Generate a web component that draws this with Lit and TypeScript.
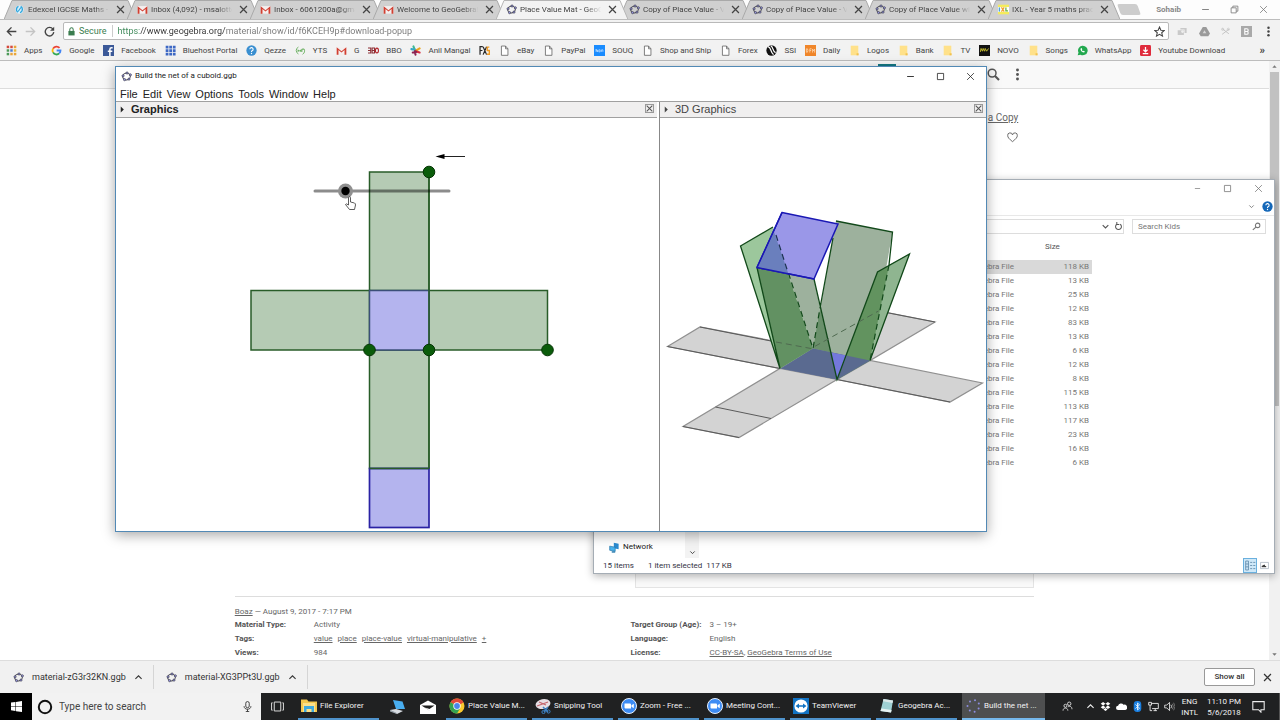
import { LitElement, html, svg, css, nothing, type TemplateResult } from "lit";
import { customElement } from "lit/decorators.js";
import { classMap } from "lit/directives/class-map.js";

const icons: Record<string, TemplateResult> = {
  ggb: svg`<ellipse cx="8" cy="8" rx="5.6" ry="4.8" transform="rotate(-18 8 8)" fill="none" stroke="#50505c" stroke-width="1.5"/>
    <g fill="#9b9be8" stroke="#33333d" stroke-width=".9"><circle cx="3" cy="7" r="1.6"/><circle cx="8.8" cy="2.9" r="1.6"/><circle cx="13.6" cy="5.6" r="1.6"/><circle cx="11.6" cy="11.8" r="1.6"/><circle cx="5.2" cy="12.6" r="1.6"/></g>`,
  dots: svg`<g fill="#8d8de0"><circle cx="2.5" cy="8" r="1"/><circle cx="5" cy="3.4" r="1"/><circle cx="10" cy="2.2" r="1"/><circle cx="13.8" cy="5.4" r="1"/><circle cx="13.6" cy="10.4" r="1"/><circle cx="9.6" cy="13.8" r="1"/><circle cx="4.8" cy="12.6" r="1"/></g>`,
  gmail: svg`<path d="M1 3h14v11H1z" fill="#f4eeee"/><path d="M1 14V3.4L8 9l7-5.6V14h-2.6V7.4L8 11 3.6 7.4V14z" fill="#d23f31"/>`,
  edx: svg`<circle cx="8" cy="8" r="6" fill="#d9f0fb"/><path d="M9.800 3.500a5 5 0 0 1-1 9M5.500 12A5 5 0 0 1 6.500 3.500" fill="none" stroke="#2ba4dc" stroke-width="2"/><path d="M6 11l4-6" stroke="#2ba4dc" stroke-width="1.600"/>`,
  ixl: svg`<path d="M0 1h16v14H0z" fill="#f5ec5a"/><path d="M0 4.500h16v7H0z" fill="#fff"/><path d="M2 5v6" stroke="#4aa3df" stroke-width="2"/><path d="M5 5l4 6M9 5l-4 6" stroke="#f0a030" stroke-width="1.800"/><path d="M11.500 5v5h3" fill="none" stroke="#67b346" stroke-width="1.800"/>`,
  close: svg`<path d="M3 3l10 10M13 3L3 13" stroke="currentColor" stroke-width="1.8" fill="none"/>`,
  thinClose: svg`<path d="M2 2l12 12M14 2L2 14" stroke="currentColor" stroke-width="1.4" fill="none"/>`,
  min: svg`<path d="M2 8h12" stroke="currentColor" stroke-width="1.6"/>`,
  max: svg`<path d="M2.500 2.500h11v11h-11z" stroke="currentColor" stroke-width="1.4" fill="none"/>`,
  restore: svg`<path d="M2 5h9v9H2zM5 5V2h9v9h-3" stroke="currentColor" stroke-width="1.4" fill="none"/>`,
  back: svg`<path d="M15 8H2.500M8 2L2 8l6 6" stroke="currentColor" stroke-width="2" fill="none"/>`,
  forward: svg`<path d="M1 8h12.500M8 2l6 6-6 6" stroke="currentColor" stroke-width="2" fill="none"/>`,
  reload: svg`<path d="M13 4.500A6.200 6.200 0 1 0 14.200 9" stroke="currentColor" stroke-width="2" fill="none"/><path d="M14.800 1v6h-6z" fill="currentColor"/>`,
  lock: svg`<path d="M2.500 7h11v8h-11z" fill="currentColor"/><path d="M5 7V4.500a3 3 0 0 1 6 0V7" fill="none" stroke="currentColor" stroke-width="1.800"/>`,
  star: svg`<path d="M8 1.500l2 4.600 5 .4-3.800 3.300 1.200 4.900L8 12l-4.400 2.700 1.200-4.900L1 6.500l5-.4z" fill="none" stroke="#444" stroke-width="1.500"/>`,
  camera: svg`<path d="M1 6h9v7H1zM5 3h9v7h-3V5H5z" fill="#c9c9c9"/><circle cx="8" cy="8" r="2" fill="#eee"/>`,
  drive: svg`<path d="M5.500 1.500h5L16 11l-2.500 4h-11L0 11z" fill="#9a9a9a"/><path d="M8 6l2.700 4.600H5.300z" fill="#d6d6d6"/>`,
  scissors: svg`<path d="M2 3l12 9M2 13l12-9" stroke="#bdbdbd" stroke-width="1.500"/><circle cx="3" cy="4" r="2" fill="none" stroke="#bdbdbd"/><circle cx="13" cy="4" r="2" fill="none" stroke="#bdbdbd"/>`,
  bbox: svg`<path d="M0 0h16v16H0z" fill="#a9a9a9"/><path d="M5.500 4v8h3a2 2 0 0 0 0-4h-3 3a2 2 0 0 0 0-4z" fill="none" stroke="#fff" stroke-width="1.600"/>`,
  more: svg`<circle cx="8" cy="2.500" r="1.800" fill="currentColor"/><circle cx="8" cy="8" r="1.800" fill="currentColor"/><circle cx="8" cy="13.500" r="1.800" fill="currentColor"/>`,
  apps: svg`<g><path d="M1 1h3.600v3.600H1z" fill="#d5493c"/><path d="M6.200 1h3.600v3.600H6.200z" fill="#d5493c"/><path d="M11.400 1H15v3.600h-3.600z" fill="#e9a53a"/><path d="M1 6.200h3.600v3.600H1z" fill="#4c9a58"/><path d="M6.200 6.200h3.600v3.600H6.200z" fill="#4b7fd0"/><path d="M11.400 6.200H15v3.600h-3.600z" fill="#e9b93a"/><path d="M1 11.400h3.600V15H1z" fill="#4c9a58"/><path d="M6.200 11.400h3.600V15H6.200z" fill="#e9a53a"/><path d="M11.400 11.400H15V15h-3.600z" fill="#e9a53a"/></g>`,
  google: svg`<g fill="none" stroke-width="2.600"><path d="M12.400 4.200A5.800 5.800 0 0 0 3 5.200" stroke="#ea4335"/><path d="M3 5.200a5.800 5.800 0 0 0 0 5.600" stroke="#fbbc05"/><path d="M3 10.800a5.800 5.800 0 0 0 9 1.500" stroke="#34a853"/><path d="M12 12.300A5.800 5.800 0 0 0 13.800 8H8.200" stroke="#4285f4"/></g>`,
  facebook: svg`<path d="M0 0h16v16H0z" fill="#3b5998"/><path d="M10 16V6.500a2.500 2.500 0 0 1 2.500-2.500H14M7 9h6.500" stroke="#fff" stroke-width="2.200" fill="none"/>`,
  bluehost: svg`<path d="M1 1h4v4H1zM6.200 1h4v4h-4zM11.400 1h4v4h-4zM1 6.200h4v4H1zM6.200 6.200h4v4h-4zM11.400 6.200h4v4h-4zM1 11.400h4v4H1zM6.200 11.400h4v4h-4zM11.400 11.400h4v4h-4z" fill="#3d68c4"/>`,
  help: svg`<circle cx="8" cy="8" r="7.500" fill="var(--help, #3a8fd0)"/><path d="M5.600 6.200a2.400 2.400 0 1 1 3.300 2.200c-.7.300-.9.700-.9 1.600" stroke="#fff" stroke-width="1.600" fill="none"/><circle cx="8" cy="12.300" r="1" fill="#fff"/>`,
  yts: svg`<path d="M5 3a5.500 5.500 0 0 0 0 10M11 13.500a5.500 5.500 0 0 0 2-8" fill="none" stroke="#5aa84f" stroke-width="1.200"/><path d="M4.500 10V7l2 2 2-2v3M10 10V6h3" stroke="#5aa84f" stroke-width="1.400" fill="none"/>`,
  bbo: svg`<path d="M0 4.500h4v7H0m0-3.500h3.500M6 4.500h3.500v7H6zm0 3.500h3.500" stroke="#8a2d33" stroke-width="1.500" fill="none"/><ellipse cx="13" cy="8" rx="2.200" ry="3.500" fill="none" stroke="#b3262b" stroke-width="1.600"/>`,
  slack: svg`<g stroke-width="3" stroke-linecap="round"><path d="M5 2l2 5" stroke="#3eb991"/><path d="M2 6l6 1" stroke="#36a6c8"/><path d="M9 8l5-3" stroke="#e9a820"/><path d="M8 9l6 2" stroke="#d72b3f"/><path d="M4 11l5-1M8 14l-1-5" stroke="#8a2250"/></g>`,
  fxs: svg`<path d="M1.500 14V2.500h4M1.500 8h3.500M6 2.500l5 11.500M11 2.500L6 14" stroke="#2a2a2a" stroke-width="1.800" fill="none"/><path d="M15 3h-3v5h3v5.500h-3.500" stroke="#f09a22" stroke-width="2" fill="none"/>`,
  page: svg`<path d="M3.500 1.500h6l3.500 4V15H3.500z" fill="#fff" stroke="#666" stroke-width="1.200"/><path d="M9.500 1.500V5.500H13" fill="none" stroke="#666" stroke-width="1.200"/>`,
  souq: svg`<path d="M0 0h16v16H0z" fill="#1a8cff"/><path d="M3 10V6l2 4V7m2 0v3h2V7H7m4 3V7h2v3" stroke="#cfe6ff" fill="none"/>`,
  ssi: svg`<circle cx="8" cy="8" r="7.500" fill="#111"/><path d="M3 2.500c5 1 3 8 8 11.500M7 1c4 2 2 8 7 10" stroke="#fff" stroke-width="1.800" fill="none"/>`,
  dfm: svg`<path d="M0 0h16v16H0z" fill="#f0862a"/><path d="M2 5.500v5h1.500q1.500-2.500 0-5zM7 11V5.500h2.500M7 8h2M11 11V6l1.500 2.500L14 6v5" stroke="#ffe3c4" fill="none"/>`,
  folder: svg`<path d="M2.500 1h11v14h-11z" fill="#ffe18a"/><path d="M11 12h3v3h-3z" fill="#f2c24f"/>`,
  novo: svg`<path d="M0 0h16v16H0z" fill="#111"/><path d="M2 10l1-5 2 4 1-4 2 4 1-4 2 4 3-4" stroke="#c7bd2e" stroke-width="1.400" fill="none"/>`,
  whatsapp: svg`<path d="M1 15l1.200-4A7 7 0 1 1 5 14z" fill="#22a84e"/><path d="M5 5.500c0 3 2.500 5.500 5.500 5.500l.8-1.800-1.800-1-1 .8-1.600-1.600.8-1-.8-1.900z" fill="#fff"/>`,
  ytd: svg`<rect width="16" height="16" rx="2" fill="#df2b3c"/><path d="M8 3v6M5 7l3 3 3-3M4 12.500h8" stroke="#fff" stroke-width="1.800" fill="none"/>`,
  search: svg`<circle cx="6.300" cy="6.300" r="4.800" fill="none" stroke="currentColor" stroke-width="1.800"/><path d="M9.800 9.800l5 5" stroke="currentColor" stroke-width="2.600"/>`,
  find: svg`<circle cx="10" cy="6" r="4" fill="none" stroke="currentColor" stroke-width="1.800"/><path d="M7 9l-5.500 5" stroke="currentColor" stroke-width="2"/>`,
  heart: svg`<path d="M8 14C3 10 1 7.800 1 5.300a3.500 3.500 0 0 1 7-1 3.500 3.500 0 0 1 7 1C15 7.800 13 10 8 14z" fill="none" stroke="currentColor" stroke-width="1.400"/>`,
  down: svg`<path d="M3 5.500l5 5 5-5" fill="none" stroke="currentColor" stroke-width="2"/>`,
  up: svg`<path d="M2.500 10.500L8 5l5.500 5.500" fill="none" stroke="currentColor" stroke-width="1.900"/>`,
  triUp: svg`<path d="M3 11l5-6 5 6z" fill="currentColor"/>`,
  triDown: svg`<path d="M3 5l5 6 5-6z" fill="currentColor"/>`,
  triRight: svg`<path d="M4 1l7 7-7 7z" fill="currentColor"/>`,
  refresh: svg`<path d="M5 4a5.200 5.200 0 1 0 6 0M5 0v4.500h4.500" fill="none" stroke="currentColor" stroke-width="1.800"/>`,
  network: svg`<path d="M7 1l7 1.500v8L7 9z" fill="#2a8bd0"/><path d="M1 6l8 1.500v6L1 12z" fill="#49b3ee" stroke="#2477ab"/><path d="M4 14.500h5" stroke="#2477ab" stroke-width="2"/>`,
  windows: svg`<path d="M0 2.300l6.500-.9v6.100H0zM7.300 1.300L16 0v7.500H7.300zM0 8.300h6.500v6.200L0 13.600zM7.300 8.300H16V16l-8.700-1.200z" fill="#fff"/>`,
  cortana: svg`<circle cx="8" cy="8" r="6.200" fill="none" stroke="#111" stroke-width="2"/>`,
  mic: svg`<rect x="5.500" y=".8" width="5" height="9" rx="2.500" fill="none" stroke="#333" stroke-width="1.300"/><path d="M3 7.500c0 6 10 6 10 0M8 12v3.500M5.500 15.400h5" fill="none" stroke="#333" stroke-width="1.300"/>`,
  taskview: svg`<path d="M4 2.500h8v11H4zM2 3.500H.700v9H2M14 3.500h1.300v9H14" fill="none" stroke="#ddd" stroke-width="1.200"/>`,
  explorer: svg`<path d="M0 1.500h6l1.500 2H16V14H0z" fill="#f3c74e"/><path d="M2 5h12v9H2z" fill="#fbe08a"/><path d="M3 8h10v6h-2.500v-3h-5v3H3z" fill="#3fa9dd"/>`,
  pc: svg`<path d="M4 1l9.500 1.500L16 10l-9 0z" fill="#49aef0"/><path d="M1 11l6-1 7 2-6 3z" fill="#d8dde2"/><path d="M1 11l6 2.500 1 1.500-7-2.500z" fill="#9aa4ad"/>`,
  mail: svg`<path d="M0 6l8-4.500L16 6v9H0z" fill="#fff"/><path d="M1.500 6.500h13L9.500 10 5 8.500l5 3.500" fill="#1f1f1f"/>`,
  chrome: svg`<circle cx="8" cy="8" r="7.500" fill="#fbc92e"/><path d="M8 8L1.500 4.250A7.500 7.500 0 0 1 14.500 4.250z" fill="#e04a3a"/><path d="M8 8L1.500 4.250A7.500 7.500 0 0 0 8 15.500l3-5z" fill="#34a350"/><path d="M8 4.250h6.500L8 8z" fill="#e04a3a"/><circle cx="8" cy="8" r="3.700" fill="#fff"/><circle cx="8" cy="8" r="2.900" fill="#4a86ea"/>`,
  snip: svg`<ellipse cx="8" cy="6" rx="7.500" ry="4.800" transform="rotate(-12 8 6)" fill="#e6dfe4"/><path d="M2 8l11-4M4 4l7 3" stroke="#c4666d" stroke-width="1.300"/><path d="M8 9l5 5M13 9l-4 5" stroke="#3d82c4" stroke-width="1.500"/><circle cx="8.500" cy="14" r="1.600" fill="none" stroke="#3d82c4"/><circle cx="13.500" cy="13.500" r="1.600" fill="none" stroke="#3d82c4"/>`,
  zoom: svg`<circle cx="8" cy="8" r="7.500" fill="#3e8cf4" stroke="#e8f0fb"/><path d="M3.500 5.500h5.500a1 1 0 0 1 1 1v4H4.500a1 1 0 0 1-1-1zM10.500 7.300l2.300-1.600v4.600l-2.300-1.600z" fill="#fff"/>`,
  team: svg`<path d="M0 0h16v16H0z" fill="#1273c4"/><circle cx="8" cy="8" r="6.600" fill="#fff"/><path d="M2.500 8L6 5.600v1.600h4V5.600L13.500 8 10 10.400V8.800H6v1.600z" fill="#1273c4"/>`,
  notepad: svg`<path d="M4.500 1l9.500 1.500-2 12L1.500 13z" fill="#9fd0d4"/><path d="M4.500 1l9.500 1.500-.4 2.500L4 3.200z" fill="#dbe9ea"/><path d="M12 14.500L1.500 13l1-2.500L12.600 12z" fill="#e8f3f3"/>`,
  people: svg`<circle cx="10.500" cy="4" r="2.500" fill="none" stroke="#eee" stroke-width="1.200"/><circle cx="5" cy="7" r="2.200" fill="none" stroke="#eee" stroke-width="1.200"/><path d="M1.500 14c0-5 7-5 7 0M8.500 9c2-2.500 6-1.500 6 3" fill="none" stroke="#eee" stroke-width="1.200"/>`,
  dropbox: svg`<path d="M4.500 1.500L8 4 4.500 6.500 1 4zM11.500 1.500L15 4l-3.500 2.500L8 4zM4.500 6.500L8 9l-3.500 2.500L1 9zM11.500 6.500L15 9l-3.500 2.500L8 9zM8 10l3 2.200L8 14.400l-3-2.200z" fill="#fff"/>`,
  cloud: svg`<path d="M3 13a3 3 0 0 1 0-6 4.500 4.500 0 0 1 8-1.500A3.800 3.800 0 0 1 13.500 13z" fill="#fff"/>`,
  bluetooth: svg`<rect x="2.500" width="11" height="16" rx="5" fill="#1a7fe0"/><path d="M5 5l6 5.500L8 13V3l3 2.500L5 11" fill="none" stroke="#fff" stroke-width="1.200"/>`,
  display: svg`<path d="M5 3.500h10v7.500H6M8 14h5M10.500 11v3M1 2h4v4H1zM3 6v8h3" fill="none" stroke="#eee" stroke-width="1.300"/>`,
  volume: svg`<path d="M1 6h3l4-4v12l-4-4H1z" fill="none" stroke="#eee" stroke-width="1.200"/><path d="M10 5.500q2 2.500 0 5" fill="none" stroke="#eee" stroke-width="1.200"/><path d="M12 4q3.200 4 0 8M14 2.500q4 5.500 0 11" fill="none" stroke="#888" stroke-width="1.100"/>`,
  notify: svg`<path d="M1 2h14v10h-4v3l-3-3H1z" fill="none" stroke="#eee" stroke-width="1.300"/>`,
  details: svg`<path d="M1 1.500h4v13H1zM1 5.800h4M1 10h4M7.500 3.500h3M12 3.500h3M7.500 8h3M12 8h3M7.500 12.500h3M12 12.500h3" fill="none" stroke="#5d87a8" stroke-width="1.200"/>`,
  large: svg`<path d="M1 2.500h14v11H1z" fill="#fff" stroke="#8b97a8"/><path d="M3 9l5-3 2 4z" fill="#333"/><path d="M3 9h8v2H3z" fill="#333"/>`,
};

const icon = (name: string, size = "") =>
  html`<svg class="icon ${size}" viewBox="0 0 16 16" aria-hidden="true">${icons[name]}</svg>`;

const base = css`
  :host { box-sizing: border-box; }
  *, *::before, *::after { box-sizing: border-box; }
  button, input { font: inherit; color: inherit; border: 0; padding: 0; margin: 0; background: none; border-radius: 0; }
  button { display: inline-flex; align-items: center; justify-content: center; flex: none; }
  input { outline: 0; min-width: 0; }
  a { color: inherit; }
  .icon { width: 11px; height: 11px; flex: none; display: block; }
  .icon.xs { width: 7px; height: 7px; }
  .icon.sm { width: 9px; height: 9px; }
  .icon.md { width: 13px; height: 13px; }
  .icon.lg { width: 16px; height: 16px; }
`;

@customElement("browser-window")
class BrowserWindow extends LitElement {
  static styles = [base, css`
    :host { display: flex; flex-direction: column; min-height: 0; background: #fff; }
    .strip { display: flex; height: 19px; padding-left: 4px; background: #fdfdfd; }
    .tab { position: relative; display: flex; align-items: center; flex: 0 1 132px; min-width: 0; margin-right: -9px; padding: 0 10px 0 10px; gap: 3px; color: #444; }
    .shape { position: absolute; inset: 0; width: 100%; height: 100%; fill: #d0d0d0; stroke: #a9a9a9; }
    .active { z-index: 1; }
    .active .shape { fill: #f3f3f3; stroke: #b5b5b5; }
    .tab > .icon, .name, .shut { position: relative; }
    .name { flex: 1; min-width: 0; justify-content: flex-start; overflow: hidden; white-space: nowrap; mask-image: linear-gradient(to right, #000 80%, transparent 98%); }
    .shut { width: 12px; height: 12px; }
    .new { width: 20px; height: 11px; margin: 4px 0 0 8px; background: #cdcdcd; transform: skewX(20deg); border-radius: 2px; }
    .caption { display: flex; align-items: center; margin-left: auto; gap: 20px; padding-right: 12px; color: #777; }
    .user { font-weight: 700; color: #888; }
    .toolbar { display: flex; align-items: center; height: 23px; padding: 0 6px; gap: 8px; border-top: 1px solid #bdbdbd; background: #f2f2f2; color: #444; }
    .dim { color: #c4c4c4; }
    .address { flex: 1; display: flex; align-items: center; gap: 3px; height: 18px; padding: 0 3px; border: 1px solid #b9b9b9; border-radius: 2px; background: #fff; color: #3b7d4f; font-size: 9px; }
    .secure { padding-right: 5px; border-right: 1px solid #ccc; }
    .url { flex: 1; padding-left: 2px; background-image: linear-gradient(to right, #3b8757 24px, #333 24px 110px, #777 110px); background-clip: text; -webkit-text-fill-color: transparent; }
    .extras { display: flex; gap: 11px; align-items: center; }
    .marks { display: flex; align-items: center; height: 19px; padding: 0 15px 1px 6px; gap: 34px; border-bottom: 1px solid #bdbdbd; background: #f2f2f2; color: #444; white-space: nowrap; }
    .links { flex: 1; min-width: 0; display: flex; align-items: center; justify-content: space-between; }
    .mark { display: flex; align-items: center; gap: 7px; text-decoration: none; }
    .overflow { font-size: 11px; font-weight: 700; }
    .view { flex: 1; min-height: 0; display: flex; overflow: hidden; }
    .page { flex: 1; min-width: 0; display: flex; flex-direction: column; color: #666; }
    .head { flex: none; display: flex; align-items: center; justify-content: flex-end; gap: 11px; height: 28px; padding-right: 245px; border-bottom: 1px solid #ddd; background: #f9f9f9; color: #555; }
    .logo { align-self: flex-start; width: 18px; height: 5px; margin: 3px 80px 0 0; background: #147a85; }
    .body { width: 63%; margin: 0 auto; }
    .title { display: flex; flex-direction: column; align-items: flex-end; padding: 21px 16px 0 0; gap: 6px; font-size: 10px; line-height: 16px; }
    .embed { margin: 50px 0 0 50%; height: 395px; border: 1px solid #e4e4e4; background: #f9f9f9; }
    .info { margin-top: 8px; padding-top: 9px; border-top: 1px solid #ddd; line-height: 12px; }
    .cols { display: grid; grid-template-columns: 99fr 101fr; line-height: 14px; }
    .cols dl { display: grid; grid-template-columns: 79px 1fr; margin: 0; }
    dt { font-weight: 700; color: #555; }
    dd { margin: 0; }
    .tags { display: flex; gap: 5px; }
    .scroll { width: 11px; display: flex; flex-direction: column; align-items: center; background: #f1f1f1; color: #777; }
    .scroll .icon { margin: 2px 0; }
    .thumb { width: 9px; height: 334px; background: #c1c1c1; margin-bottom: auto; }
    .shelf { display: flex; align-items: center; height: 33px; padding: 0 7px 0 13px; border-top: 1px solid #ddd; background: #f1f1f1; color: #333; font-size: 9px; }
    .file { display: flex; align-items: center; height: 24px; gap: 8px; padding-right: 10px; margin-right: 12px; border-right: 1px solid #d5d5d5; }
    .all { margin: 0 7px 0 auto; width: 51px; height: 18px; border: 1px solid #999; border-radius: 2px; background: #fff; font-size: 8px; font-weight: 500; }
  `];

  tabs: [string, string][] = [
    ["edx", "Edexcel IGCSE Maths - 1"], ["gmail", "Inbox (4,092) - msalotto"], ["gmail", "Inbox - 6061200a@gmail"],
    ["gmail", "Welcome to GeoGebra!"], ["ggb", "Place Value Mat - GeoGeb"], ["ggb", "Copy of Place Value - Vi"],
    ["ggb", "Copy of Place Value - Vi"], ["ggb", "Copy of Place Value with"], ["ixl", "IXL - Year 5 maths practice"],
  ];
  marks: [string, string][] = [
    ["apps", "Apps"], ["google", "Google"], ["facebook", "Facebook"], ["bluehost", "Bluehost Portal"], ["help", "Qezze"],
    ["yts", "YTS"], ["gmail", "G"], ["bbo", "BBO"], ["slack", "Anil Mangal"], ["fxs", ""], ["page", "eBay"], ["page", "PayPal"],
    ["souq", "SOUQ"], ["page", "Shop and Ship"], ["page", "Forex"], ["ssi", "SSI"], ["dfm", "Daily"], ["folder", "Logos"],
    ["folder", "Bank"], ["folder", "TV"], ["novo", "NOVO"], ["folder", "Songs"], ["whatsapp", "WhatsApp"], ["ytd", "Youtube Download"],
  ];

  render() {
    return html`
      <div class="strip">
        ${this.tabs.map(([i, t], n) => html`<div class=${classMap({ tab: true, active: n === 4 })}>
          <svg class="shape" viewBox="0 0 132 19" preserveAspectRatio="none"><path d="M0 19.500L8 .500H124L132 19.500"/></svg>
          ${icon(i)}<button class="name">${t}</button><button class="shut" aria-label="Close tab">${icon("close")}</button>
        </div>`)}
        <button class="new" aria-label="New tab"></button>
        <div class="caption"><span class="user">Sohaib</span>
          <button aria-label="Minimize">${icon("min", "sm")}</button><button aria-label="Restore">${icon("restore", "sm")}</button><button aria-label="Close">${icon("thinClose", "sm")}</button>
        </div>
      </div>
      <div class="toolbar">
        <button aria-label="Back">${icon("back")}</button><button class="dim" aria-label="Forward">${icon("forward")}</button><button aria-label="Reload">${icon("reload")}</button>
        <label class="address">${icon("lock", "sm")}<span class="secure">Secure</span>
          <input class="url" aria-label="Address" value="https://www.geogebra.org/material/show/id/f6KCEH9p#download-popup">${icon("star")}</label>
        <div class="extras">${icon("camera")}${icon("drive")}${icon("scissors", "sm")}${icon("bbox")}${icon("more")}</div>
      </div>
      <nav class="marks">
        <div class="links">${this.marks.map(([i, t]) => html`<a class="mark" href="#">${icon(i)}${t || nothing}</a>`)}</div>
        <button class="overflow">»</button>
      </nav>
      <div class="view">
        <div class="page">
          <header class="head"><span class="logo"></span>${icon("search", "md")}${icon("more", "md")}</header>
          <div class="body">
            <div class="title"><a href="#">a Copy</a>${icon("heart")}</div>
            <div class="embed"></div>
            <div class="info"><a href="#">Boaz</a> — August 9, 2017 - 7:17 PM
              <div class="cols">
                <dl><dt>Material Type:</dt><dd>Activity</dd><dt>Tags:</dt>
                  <dd class="tags"><a href="#">value</a><a href="#">place</a><a href="#">place-value</a><a href="#">virtual-manipulative</a><a href="#">+</a></dd>
                  <dt>Views:</dt><dd>984</dd></dl>
                <dl><dt>Target Group (Age):</dt><dd>3 – 19+</dd><dt>Language:</dt><dd>English</dd>
                  <dt>License:</dt><dd><a href="#">CC-BY-SA</a>, <a href="#">GeoGebra Terms of Use</a></dd></dl>
              </div>
            </div>
          </div>
        </div>
        <div class="scroll">${icon("triUp", "xs")}<div class="thumb"></div>${icon("triDown", "xs")}</div>
      </div>
      <footer class="shelf">
        ${["material-zG3r32KN.ggb", "material-XG3PPt3U.ggb"].map((f) => html`<div class="file">${icon("ggb")}<span>${f}</span><button aria-label="More">${icon("up", "sm")}</button></div>`)}
        <button class="all">Show all</button><button aria-label="Close">${icon("close")}</button>
      </footer>`;
  }
}

@customElement("explorer-window")
class ExplorerWindow extends LitElement {
  static styles = [base, css`
    :host { display: flex; flex-direction: column; background: #fff; border: 1px solid #a5adb5; box-shadow: 0 2px 8px rgba(0, 0, 0, .3); color: #777; }
    .caption { display: flex; justify-content: flex-end; align-items: center; gap: 22px; height: 17px; padding-right: 11px; }
    .ribbon { display: flex; justify-content: flex-end; align-items: center; gap: 7px; height: 19px; padding-right: 1px; border-bottom: 1px solid #e8e8e8; --help: #1467b8; }
    .bar { display: flex; align-items: center; gap: 8px; padding: 3px 8px 0 100px; }
    .path, .find { display: flex; align-items: center; height: 15px; border: 1px solid #ddd; }
    .path { flex: 1; justify-content: flex-end; gap: 4px; padding-right: 0; color: #555; }
    .find { width: 134px; padding: 0 4px 0 5px; }
    .find input { flex: 1; }
    .find input::placeholder { color: #777; opacity: 1; }
    .main { flex: 1; display: flex; min-height: 0; }
    .side { flex: none; width: 105px; display: flex; align-items: flex-end; }
    .net { flex: 1; display: flex; align-items: center; gap: 3px; padding: 0 0 5px 15px; color: #222; }
    .track { width: 14px; height: 100%; display: flex; align-items: flex-end; justify-content: center; padding-bottom: 2px; background: #f3f3f3; color: #333; }
    table { width: 393px; height: 0; border-collapse: collapse; table-layout: fixed; }
    th { height: 26px; font-weight: 400; text-align: left; color: #555; padding: 0; }
    th:last-child { padding-left: 22px; }
    td { height: 14px; padding: 0; }
    .type { width: 59px; }
    .size { width: 69px; }
    td.size { text-align: right; padding-right: 3px; }
    .picked { background: #d9d9d9; }
    .status { display: flex; align-items: center; gap: 14px; height: 15px; padding: 0 5px 0 9px; color: #334; }
    .views { display: flex; align-items: center; margin-left: auto; gap: 3px; }
    .on { width: 14px; height: 15px; background: #cfe8f8; border: 1px solid #6ab0de; }
  `];
  sizes = [118, 13, 25, 12, 83, 13, 6, 12, 8, 115, 113, 117, 23, 16, 6];
  render() {
    return html`
      <div class="caption"><button aria-label="Minimize">${icon("min", "xs")}</button><button aria-label="Maximize">${icon("max", "sm")}</button><button aria-label="Close">${icon("thinClose", "sm")}</button></div>
      <div class="ribbon">${icon("down", "xs")}${icon("help")}</div>
      <div class="bar"><div class="path">${icon("down", "sm")}${icon("refresh", "sm")}</div>
        <label class="find"><input aria-label="Search Kids" placeholder="Search Kids">${icon("find", "sm")}</label></div>
      <div class="main">
        <div class="side"><div class="net">${icon("network")}Network</div><div class="track">${icon("down", "xs")}</div></div>
        <table><thead><tr><th></th><th class="type"></th><th class="size">Size</th></tr></thead>
          <tbody>${this.sizes.map((s, n) => html`<tr class=${n ? "" : "picked"}><td></td><td class="type">GeoGebra File</td><td class="size">${s} KB</td></tr>`)}</tbody></table>
      </div>
      <div class="status"><span>15 items</span><span>1 item selected&nbsp; 117 KB</span>
        <span class="views"><button class="on" aria-label="Details">${icon("details")}</button><button aria-label="Large icons">${icon("large", "sm")}</button></span></div>`;
  }
}

@customElement("geogebra-window")
class GeogebraWindow extends LitElement {
  static styles = [base, css`
    :host { display: flex; flex-direction: column; background: #fff; border: 1px solid #5289b5; box-shadow: 0 3px 12px rgba(0, 0, 0, .35); color: #222; }
    .caption { display: flex; align-items: center; gap: 3px; height: 18px; padding: 0 11px 0 5px; }
    .controls { display: flex; gap: 21px; margin-left: auto; }
    .menu { display: flex; align-items: center; gap: 5px; height: 16px; padding: 2px 0 0 4px; font: 11px "Liberation Sans", Arial, sans-serif; }
    .panes { flex: 1; min-height: 0; display: flex; border-top: 1px solid #a0a0a0; font: 11px "Liberation Sans", Arial, sans-serif; }
    .pane { flex: 541 1 0; min-width: 0; display: flex; flex-direction: column; }
    .pane + .pane { flex-grow: 326; margin-left: 2px; border-left: 1px solid #888; color: #444; }
    h2 { display: flex; align-items: center; gap: 5px; height: 16px; margin: 0; padding: 0 3px; border-bottom: 1px solid #a0a0a0; background: #f0efef; font-size: 11px; line-height: 15px; font-weight: 400; }
    h2.focus { font-weight: 700; }
    .x { align-self: flex-start; width: 9px; height: 9px; margin: 2px 0 0 auto; border: 1px solid #999; color: #555; }
    .x .icon { width: 9px; height: 9px; }
    .canvas { flex: 1; min-height: 0; width: 100%; display: block; }
  `];

  flat() {
    return svg`
      <g fill="#b5cbb4" stroke="#285c28" stroke-width="1.500">
        <rect x="369.500" y="172" width="59.500" height="118.500"/><rect x="251" y="290.500" width="118.500" height="59.500"/>
        <rect x="429" y="290.500" width="118.500" height="59.500"/><rect x="369.500" y="350" width="59.500" height="118.500"/></g>
      <rect x="369.500" y="290.500" width="59.500" height="59.500" fill="#b4b4ee" stroke="#3b4f78" stroke-width="1.500"/>
      <rect x="369.500" y="468.500" width="59.500" height="59" fill="#b4b4ee" stroke="#2a22a4" stroke-width="1.700"/>
      <path d="M369.500 468.500H429M429 172V468.500" stroke="#285c28" stroke-width="1.500"/>
      <path d="M315 191H449" stroke="#000" stroke-opacity=".45" stroke-width="3" stroke-linecap="round"/>
      <circle cx="345.500" cy="191" r="7.500" fill="#8f8f8f"/><circle cx="345.500" cy="191" r="4.200" fill="#000"/>
      <path d="M443 156.500H465" stroke="#222"/><path d="M435.500 156.500l9-2.500v5z" fill="#000"/>
      <g fill="#0a5c0a" stroke="#053505"><circle cx="429" cy="172" r="5.800"/><circle cx="369.500" cy="350" r="5.800"/><circle cx="429" cy="350" r="5.800"/><circle cx="547.500" cy="350" r="5.800"/></g>
      <path d="M348.500 205v-7.500q1-1.500 2 0v4.500l4 1q1 .500 1 2l-1 4.500h-5l-4-5q.500-1.500 3 .500z" fill="#fff" stroke="#333" stroke-width=".8"/>`;
  }

  solid() {
    return svg`
      <g fill="#d3d3d3" stroke="#909090" stroke-width="1.200">
        <path d="M667.500 346.500L700 327 813 348.500 780 368.500z"/><path d="M837 379.500L870 360.500 982.500 383 950 402z"/>
        <path d="M780 368.500L837 379.500 739 437.500 683 426.500z"/><path d="M813 348.500L878.500 311 935 322 870 360.500z"/></g>
      <path d="M667.500 346.500L780 368.500M837 379.500L950 402M715.500 407L771 418.500M683 426.500L739 437.500M700 327L776 342M878.500 311L935 322" stroke="#5a5a5a" fill="none"/>
      <g stroke="none">
        <path d="M780 368.500L813 348.500 870 360.500 837 379.500z" fill="#5f6f98"/>
        <path d="M740.500 246L773 227 813 348.500 780 368.500z" fill="#9cc79c"/>
        <path d="M836 221L892.500 232 870 360.500 813 348.500z" fill="#9db19d"/>
        <path d="M877.500 272L909.500 254 870 360.500 837 379.500z" fill="#62935f"/>
        <path d="M889 265L909.500 254 870 360.500z" fill="#8fb590"/>
        <path d="M757 267.500L788 274 813 348.500 780 368.500z" fill="#629162"/>
        <path d="M788 274L814 279 820 308 813 348.500z" fill="#9db19d"/>
        <path d="M820 308L813 348.500 831 352.500z" fill="#6a906b"/>
        <path d="M782 368.500L813 348.500 870 360.500 837 379.500z" fill="#5a6a90"/>
        <path d="M831 352.500L847 355.500 837 379.500z" fill="#7478dc"/>
      </g>
      <g fill="none" stroke="#12491a" stroke-width="1.300">
        <path d="M773 227L740.500 246 780 368.500M757 267.500L780 368.500M814 279L837 379.500L877.500 272 909.500 254 870 360.500M836 221L892.500 232L889 265M833 238L820 308"/>
        <path d="M776 235L813 348.500L820 308M889 265L870 360.500" stroke-dasharray="6 4" stroke-width="1.200"/>
        <path d="M776 342L811 348.500L878.500 311" stroke="#4f6a50" stroke-dasharray="6 4" stroke-width="1"/></g>
      <path d="M782 212.500L838 224 814 279 757 267.500z" fill="#9a97e8" stroke="#1a18b4" stroke-width="1.500"/>
      <path d="M774 232L788.500 274 757.500 267.500z" fill="#6a7fbd"/>
      <path d="M776 235L788.500 274" stroke="#1c3350" stroke-width="1.200" stroke-dasharray="6 4"/>
      <path d="M757 267.500L782 212.500M757 267.500L814 279" stroke="#1a18b4" stroke-width="1.500"/>`;
  }

  render() {
    return html`
      <div class="caption">${icon("ggb")}<span>Build the net of a cuboid.ggb</span>
        <div class="controls"><button aria-label="Minimize">${icon("min", "sm")}</button><button aria-label="Maximize">${icon("max", "sm")}</button><button aria-label="Close">${icon("thinClose", "sm")}</button></div></div>
      <nav class="menu">${["File", "Edit", "View", "Options", "Tools", "Window", "Help"].map((m) => html`<button>${m}</button>`)}</nav>
      <div class="panes">
        <section class="pane"><h2 class="focus">${icon("triRight", "xs")}Graphics<button class="x" aria-label="Close view">${icon("close")}</button></h2>
          <svg class="canvas" viewBox="116 118 541 413">${this.flat()}</svg></section>
        <section class="pane"><h2>${icon("triRight", "xs")}3D Graphics<button class="x" aria-label="Close view">${icon("close")}</button></h2>
          <svg class="canvas" viewBox="660 118 326 413">${this.solid()}</svg></section>
      </div>`;
  }
}

@customElement("task-bar")
class TaskBar extends LitElement {
  static styles = [base, css`
    :host { display: flex; align-items: stretch; height: 27px; background: #202122; color: #f2f2f2; }
    .start { width: 32px; background: #000; }
    .search { display: flex; align-items: center; gap: 6px; width: 229px; padding: 0 8px 0 5px; background: #f2f2f2; color: #444; font-size: 10px; }
    .search input { flex: 1; }
    .search input::placeholder { color: #444; opacity: 1; }
    .apps { display: flex; gap: 5px; }
    .pin { width: 26px; }
    .view { width: 32px; }
    .app { width: 81px; justify-content: flex-start; gap: 3px; padding: 0 3px; border-bottom: 2px solid #4f93cc; white-space: nowrap; }
    .current { width: 83px; background: #4e4f50; border-color: #76b9ed; }
    .tray { display: flex; align-items: center; gap: 5px; margin-left: auto; }
    .people { margin-right: 8px; }
    .text { text-align: center; line-height: 11px; }
    .lang { margin-left: 1px; }
    .clock { margin: 0 6px 0 4px; }
    .edge { width: 9px; height: 100%; margin-left: 1px; border-right: 1px solid #555; }
  `];
  apps: [string, string][] = [
    ["chrome", "Place Value M..."], ["snip", "Snipping Tool"], ["zoom", "Zoom - Free ..."], ["zoom", "Meeting Cont..."],
    ["team", "TeamViewer"], ["notepad", "Geogebra Ac..."], ["dots", "Build the net ..."],
  ];
  render() {
    return html`
      <button class="start" aria-label="Start">${icon("windows")}</button>
      <label class="search">${icon("cortana", "lg")}<input aria-label="Search" placeholder="Type here to search">${icon("mic")}</label>
      <div class="apps">
        <button class="view" aria-label="Task view">${icon("taskview", "md")}</button>
        <button class="app">${icon("explorer", "lg")}File Explorer</button>
        <button class="pin" aria-label="This PC">${icon("pc", "lg")}</button>
        <button class="pin" aria-label="Mail">${icon("mail", "lg")}</button>
        ${this.apps.map(([i, t]) => html`<button class=${classMap({ app: true, current: i === "dots" })}>${icon(i, "lg")}${t}</button>`)}
      </div>
      <div class="tray"><span class="people">${icon("people")}</span>${icon("up", "sm")}${icon("dropbox")}${icon("cloud")}${icon("bluetooth")}${icon("display")}${icon("volume")}
        <div class="text lang">ENG<br>INTL</div><div class="text clock">11:10 PM<br>5/6/2018</div>${icon("notify", "md")}<span class="edge"></span></div>`;
  }
}

@customElement("app-root")
class AppRoot extends LitElement {
  static styles = css`
    :host { position: relative; display: flex; flex-direction: column; height: 100vh; overflow: hidden; font: 8px/12px Roboto, "Open Sans", sans-serif; }
    browser-window { flex: 1; }
    task-bar { flex: none; }
    explorer-window { position: absolute; left: 593px; right: 5px; top: 179px; height: 395px; }
    geogebra-window { position: absolute; left: 115px; right: 293px; top: 66px; height: 466px; }
  `;
  render() {
    return html`<browser-window></browser-window><explorer-window></explorer-window><geogebra-window></geogebra-window><task-bar></task-bar>`;
  }
}
